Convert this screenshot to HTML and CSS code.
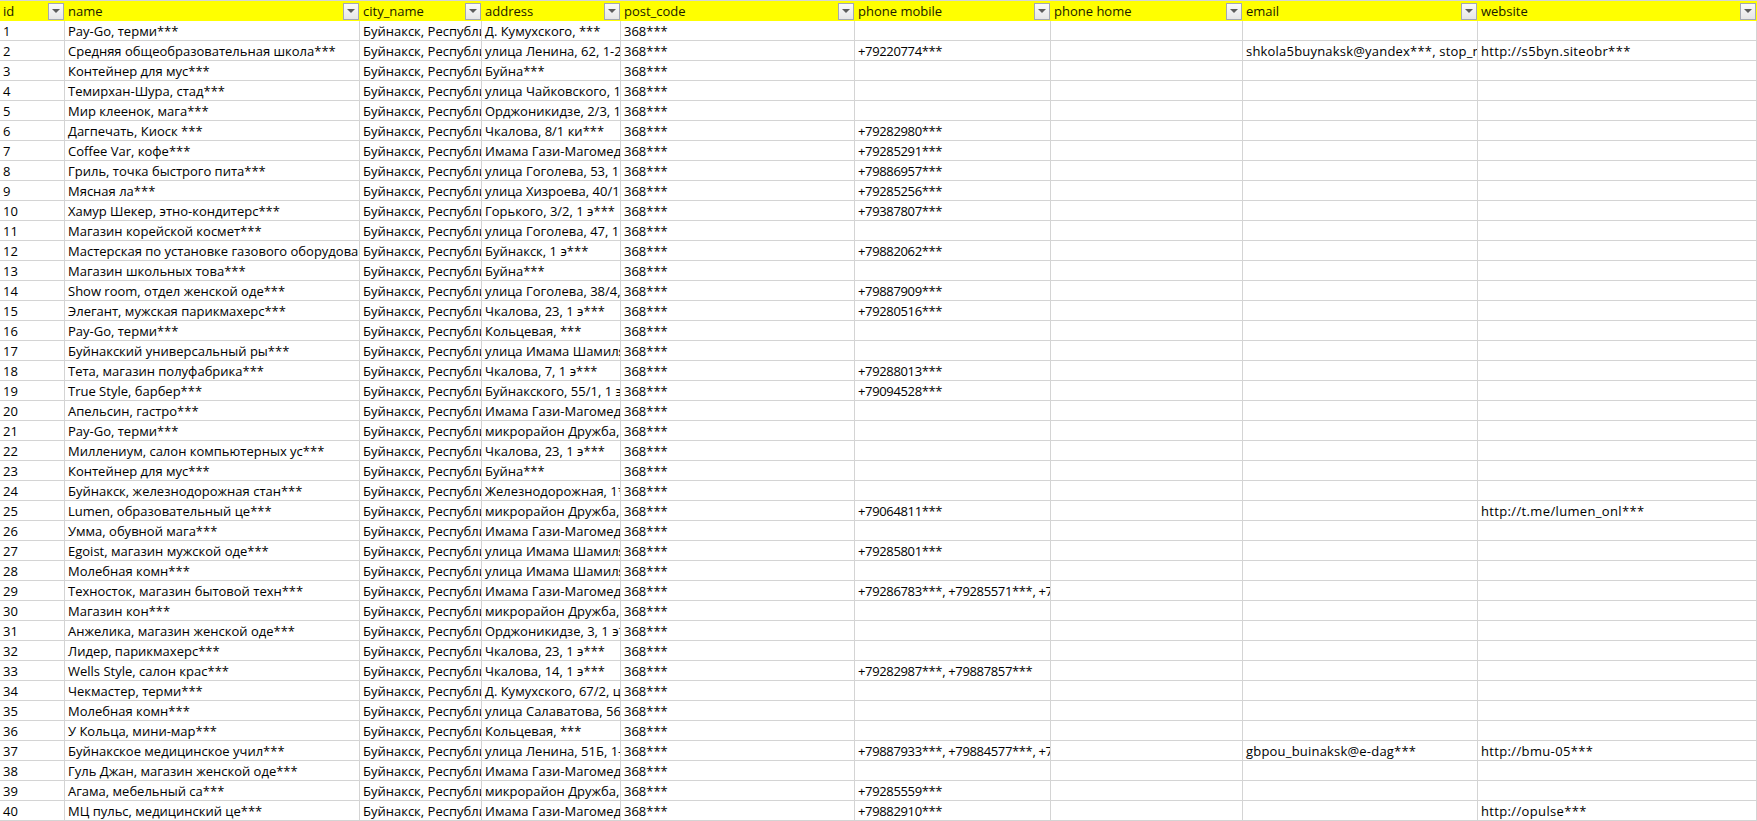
FILE: index.html
```html
<!DOCTYPE html>
<html lang="ru">
<head>
<meta charset="utf-8">
<title>Буйнакск</title>
<link rel="stylesheet" href="styles.css">
</head>
<body>
<table class="sheet">
<colgroup><col class="c-id"><col class="c-name"><col class="c-city"><col class="c-addr"><col class="c-post"><col class="c-mob"><col class="c-home"><col class="c-mail"><col class="c-web"></colgroup>
<thead><tr>
<th><div class="head"><span class="label">id</span><span class="filter"></span></div></th>
<th><div class="head"><span class="label">name</span><span class="filter"></span></div></th>
<th><div class="head"><span class="label">city_name</span><span class="filter"></span></div></th>
<th><div class="head"><span class="label">address</span><span class="filter"></span></div></th>
<th><div class="head"><span class="label">post_code</span><span class="filter"></span></div></th>
<th><div class="head"><span class="label">phone mobile</span><span class="filter"></span></div></th>
<th><div class="head"><span class="label">phone home</span><span class="filter"></span></div></th>
<th><div class="head"><span class="label">email</span><span class="filter"></span></div></th>
<th><div class="head"><span class="label">website</span><span class="filter"></span></div></th>
</tr></thead>
<tbody>
<tr><td>1</td><td>Pay-Go, терми***</td><td>Буйнакск, Республика Дагестан</td><td>Д. Кумухского, ***</td><td>368***</td><td></td><td></td><td></td><td></td></tr>
<tr><td>2</td><td>Средняя общеобразовательная школа***</td><td>Буйнакск, Республика Дагестан</td><td>улица Ленина, 62, 1-2 этаж***</td><td>368***</td><td>+79220774***</td><td></td><td>shkola5buynaksk@yandex***, stop_narko***</td><td>http://s5byn.siteobr***</td></tr>
<tr><td>3</td><td>Контейнер для мус***</td><td>Буйнакск, Республика Дагестан</td><td>Буйна***</td><td>368***</td><td></td><td></td><td></td><td></td></tr>
<tr><td>4</td><td>Темирхан-Шура, стад***</td><td>Буйнакск, Республика Дагестан</td><td>улица Чайковского, 13***</td><td>368***</td><td></td><td></td><td></td><td></td></tr>
<tr><td>5</td><td>Мир клеенок, мага***</td><td>Буйнакск, Республика Дагестан</td><td>Орджоникидзе, 2/3, 1 э***</td><td>368***</td><td></td><td></td><td></td><td></td></tr>
<tr><td>6</td><td>Дагпечать, Киоск ***</td><td>Буйнакск, Республика Дагестан</td><td>Чкалова, 8/1 ки***</td><td>368***</td><td>+79282980***</td><td></td><td></td><td></td></tr>
<tr><td>7</td><td>Coffee Var, кофе***</td><td>Буйнакск, Республика Дагестан</td><td>Имама Гази-Магомеда, 1***</td><td>368***</td><td>+79285291***</td><td></td><td></td><td></td></tr>
<tr><td>8</td><td>Гриль, точка быстрого пита***</td><td>Буйнакск, Республика Дагестан</td><td>улица Гоголева, 53, 1 э***</td><td>368***</td><td>+79886957***</td><td></td><td></td><td></td></tr>
<tr><td>9</td><td>Мясная ла***</td><td>Буйнакск, Республика Дагестан</td><td>улица Хизроева, 40/1, 1***</td><td>368***</td><td>+79285256***</td><td></td><td></td><td></td></tr>
<tr><td>10</td><td>Хамур Шекер, этно-кондитерс***</td><td>Буйнакск, Республика Дагестан</td><td>Горького, 3/2, 1 э***</td><td>368***</td><td>+79387807***</td><td></td><td></td><td></td></tr>
<tr><td>11</td><td>Магазин корейской космет***</td><td>Буйнакск, Республика Дагестан</td><td>улица Гоголева, 47, 1 э***</td><td>368***</td><td></td><td></td><td></td><td></td></tr>
<tr><td>12</td><td>Мастерская по установке газового оборудования***</td><td>Буйнакск, Республика Дагестан</td><td>Буйнакск, 1 э***</td><td>368***</td><td>+79882062***</td><td></td><td></td><td></td></tr>
<tr><td>13</td><td>Магазин школьных това***</td><td>Буйнакск, Республика Дагестан</td><td>Буйна***</td><td>368***</td><td></td><td></td><td></td><td></td></tr>
<tr><td>14</td><td>Show room, отдел женской оде***</td><td>Буйнакск, Республика Дагестан</td><td>улица Гоголева, 38/4, 1***</td><td>368***</td><td>+79887909***</td><td></td><td></td><td></td></tr>
<tr><td>15</td><td>Элегант, мужская парикмахерс***</td><td>Буйнакск, Республика Дагестан</td><td>Чкалова, 23, 1 э***</td><td>368***</td><td>+79280516***</td><td></td><td></td><td></td></tr>
<tr><td>16</td><td>Pay-Go, терми***</td><td>Буйнакск, Республика Дагестан</td><td>Кольцевая, ***</td><td>368***</td><td></td><td></td><td></td><td></td></tr>
<tr><td>17</td><td>Буйнакский универсальный ры***</td><td>Буйнакск, Республика Дагестан</td><td>улица Имама Шамиля, ***</td><td>368***</td><td></td><td></td><td></td><td></td></tr>
<tr><td>18</td><td>Тета, магазин полуфабрика***</td><td>Буйнакск, Республика Дагестан</td><td>Чкалова, 7, 1 э***</td><td>368***</td><td>+79288013***</td><td></td><td></td><td></td></tr>
<tr><td>19</td><td>True Style, барбер***</td><td>Буйнакск, Республика Дагестан</td><td>Буйнакского, 55/1, 1 э***</td><td>368***</td><td>+79094528***</td><td></td><td></td><td></td></tr>
<tr><td>20</td><td>Апельсин, гастро***</td><td>Буйнакск, Республика Дагестан</td><td>Имама Гази-Магомеда, 1***</td><td>368***</td><td></td><td></td><td></td><td></td></tr>
<tr><td>21</td><td>Pay-Go, терми***</td><td>Буйнакск, Республика Дагестан</td><td>микрорайон Дружба, 1***</td><td>368***</td><td></td><td></td><td></td><td></td></tr>
<tr><td>22</td><td>Миллениум, салон компьютерных ус***</td><td>Буйнакск, Республика Дагестан</td><td>Чкалова, 23, 1 э***</td><td>368***</td><td></td><td></td><td></td><td></td></tr>
<tr><td>23</td><td>Контейнер для мус***</td><td>Буйнакск, Республика Дагестан</td><td>Буйна***</td><td>368***</td><td></td><td></td><td></td><td></td></tr>
<tr><td>24</td><td>Буйнакск, железнодорожная стан***</td><td>Буйнакск, Республика Дагестан</td><td>Железнодорожная, 1***</td><td>368***</td><td></td><td></td><td></td><td></td></tr>
<tr><td>25</td><td>Lumen, образовательный це***</td><td>Буйнакск, Республика Дагестан</td><td>микрорайон Дружба, 1***</td><td>368***</td><td>+79064811***</td><td></td><td></td><td>http://t.me/lumen_onl***</td></tr>
<tr><td>26</td><td>Умма, обувной мага***</td><td>Буйнакск, Республика Дагестан</td><td>Имама Гази-Магомеда, 1***</td><td>368***</td><td></td><td></td><td></td><td></td></tr>
<tr><td>27</td><td>Egoist, магазин мужской оде***</td><td>Буйнакск, Республика Дагестан</td><td>улица Имама Шамиля, ***</td><td>368***</td><td>+79285801***</td><td></td><td></td><td></td></tr>
<tr><td>28</td><td>Молебная комн***</td><td>Буйнакск, Республика Дагестан</td><td>улица Имама Шамиля, ***</td><td>368***</td><td></td><td></td><td></td><td></td></tr>
<tr><td>29</td><td>Техносток, магазин бытовой техн***</td><td>Буйнакск, Республика Дагестан</td><td>Имама Гази-Магомеда, 1***</td><td>368***</td><td>+79286783***, +79285571***, +79***</td><td></td><td></td><td></td></tr>
<tr><td>30</td><td>Магазин кон***</td><td>Буйнакск, Республика Дагестан</td><td>микрорайон Дружба, 1***</td><td>368***</td><td></td><td></td><td></td><td></td></tr>
<tr><td>31</td><td>Анжелика, магазин женской оде***</td><td>Буйнакск, Республика Дагестан</td><td>Орджоникидзе, 3, 1 э***</td><td>368***</td><td></td><td></td><td></td><td></td></tr>
<tr><td>32</td><td>Лидер, парикмахерс***</td><td>Буйнакск, Республика Дагестан</td><td>Чкалова, 23, 1 э***</td><td>368***</td><td></td><td></td><td></td><td></td></tr>
<tr><td>33</td><td>Wells Style, салон крас***</td><td>Буйнакск, Республика Дагестан</td><td>Чкалова, 14, 1 э***</td><td>368***</td><td>+79282987***, +79887857***</td><td></td><td></td><td></td></tr>
<tr><td>34</td><td>Чекмастер, терми***</td><td>Буйнакск, Республика Дагестан</td><td>Д. Кумухского, 67/2, цокол***</td><td>368***</td><td></td><td></td><td></td><td></td></tr>
<tr><td>35</td><td>Молебная комн***</td><td>Буйнакск, Республика Дагестан</td><td>улица Салаватова, 56, ***</td><td>368***</td><td></td><td></td><td></td><td></td></tr>
<tr><td>36</td><td>У Кольца, мини-мар***</td><td>Буйнакск, Республика Дагестан</td><td>Кольцевая, ***</td><td>368***</td><td></td><td></td><td></td><td></td></tr>
<tr><td>37</td><td>Буйнакское медицинское учил***</td><td>Буйнакск, Республика Дагестан</td><td>улица Ленина, 51Б, 1-3 э***</td><td>368***</td><td>+79887933***, +79884577***, +79***</td><td></td><td>gbpou_buinaksk@e-dag***</td><td>http://bmu-05***</td></tr>
<tr><td>38</td><td>Гуль Джан, магазин женской оде***</td><td>Буйнакск, Республика Дагестан</td><td>Имама Гази-Магомеда, 1***</td><td>368***</td><td></td><td></td><td></td><td></td></tr>
<tr><td>39</td><td>Агама, мебельный са***</td><td>Буйнакск, Республика Дагестан</td><td>микрорайон Дружба, 1***</td><td>368***</td><td>+79285559***</td><td></td><td></td><td></td></tr>
<tr><td>40</td><td>МЦ пульс, медицинский це***</td><td>Буйнакск, Республика Дагестан</td><td>Имама Гази-Магомеда, 1***</td><td>368***</td><td>+79882910***</td><td></td><td></td><td>http://opulse***</td></tr>
</tbody>
</table>
</body>
</html>
```
FILE: styles.css
```css
html, body {
  margin: 0;
  padding: 0;
  background: #fff;
  overflow: hidden;
}
.sheet {
  table-layout: fixed;
  width: 1757px;
  border-collapse: separate;
  border-spacing: 0;
  font-family: "Open Sans", "Noto Sans", sans-serif;
  font-size: 13px;
  color: #000;
}
.c-id { width: 65px; }
.c-name { width: 295px; }
.c-city { width: 122px; }
.c-addr { width: 139px; }
.c-post { width: 234px; }
.c-mob { width: 196px; }
.c-home { width: 192px; }
.c-mail { width: 235px; }
.c-web { width: 279px; }
.sheet th {
  height: 21px;
  padding: 0;
  background: #ffff00;
  border-top: 1px solid #d4d4d4;
  box-sizing: border-box;
  font-weight: 400;
  text-align: left;
}
.head {
  display: flex;
  align-items: center;
  justify-content: space-between;
  height: 20px;
  padding: 0 1px 0 3px;
}
.label {
  color: #1a1a00;
}
.filter {
  box-sizing: border-box;
  display: flex;
  align-items: center;
  justify-content: center;
  flex: none;
  width: 16px;
  height: 17px;
  border: 1px solid #a3a8b4;
  background: linear-gradient(#fafafa, #e6e6e6);
}
.filter::after {
  content: "";
  width: 0;
  height: 0;
  border-left: 4px solid transparent;
  border-right: 4px solid transparent;
  border-top: 4px solid #5c5c5c;
}
.sheet td {
  box-sizing: border-box;
  height: 20px;
  padding: 1px 0 0 3px;
  line-height: 18px;
  white-space: nowrap;
  overflow: hidden;
  border-right: 1px solid #d4d4d4;
  border-bottom: 1px solid #d4d4d4;
}
.sheet td:nth-child(6) {
  letter-spacing: -0.35px;
}
.sheet td:nth-child(8) {
  letter-spacing: 0.2px;
}
.sheet td:nth-child(9) {
  letter-spacing: 0.35px;
}
```
